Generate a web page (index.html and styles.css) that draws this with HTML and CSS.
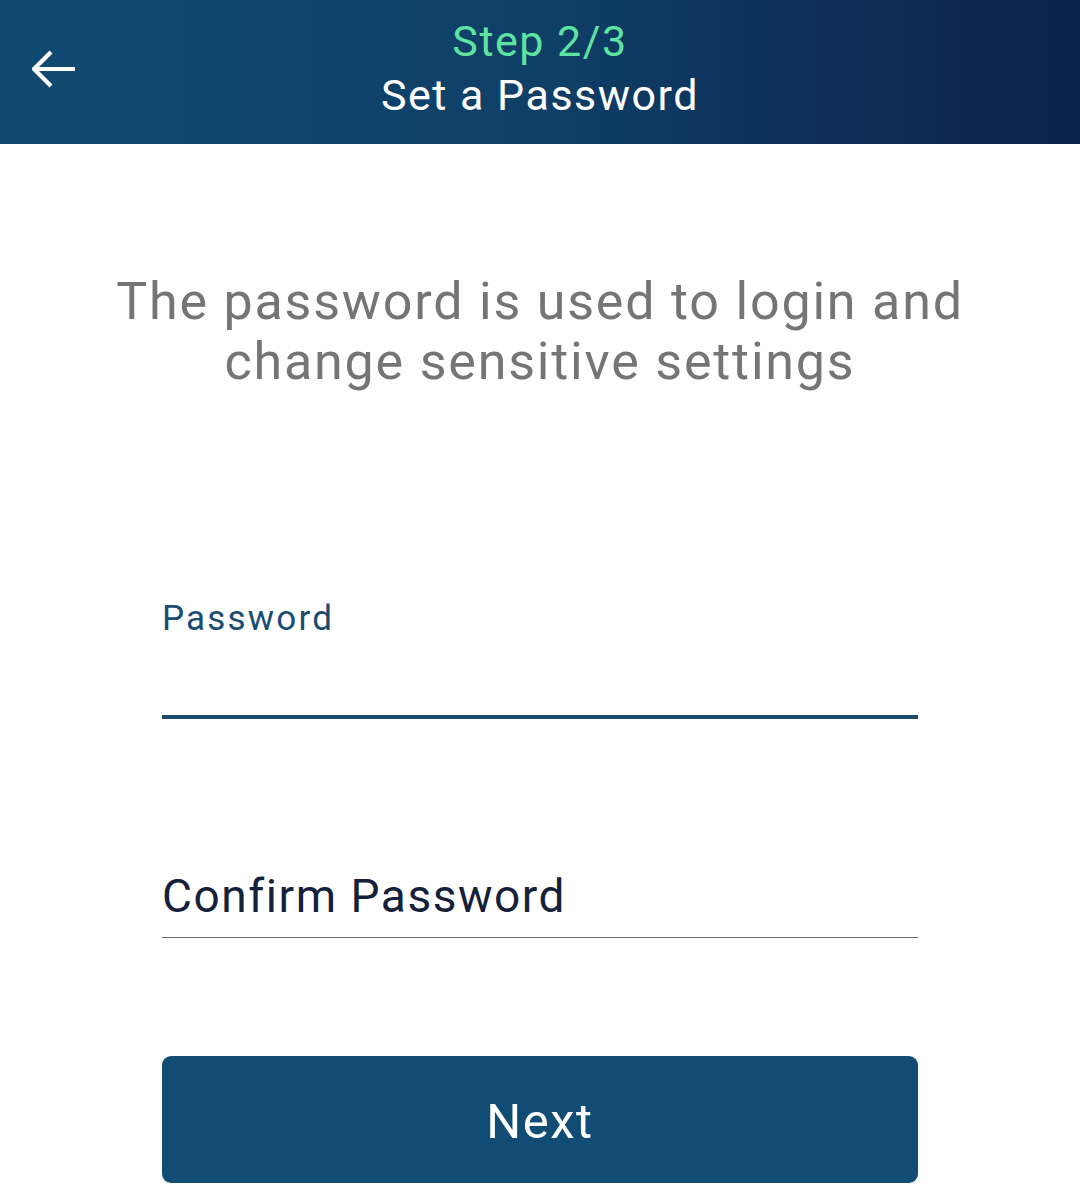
FILE: index.html
```html
<!DOCTYPE html>
<html>
<head>
<meta charset="utf-8">
<link rel="stylesheet" href="styles.css">
</head>
<body>
<header class="topbar">
  <div class="back">
    <svg width="48" height="48" viewBox="0 0 48 48"><path d="M45 24H4M21 7L4 24l17 17" fill="none" stroke="#fff" stroke-width="4.2" stroke-linecap="butt" stroke-linejoin="round"/></svg>
  </div>
  <div class="titles">
    <div class="step">Step 2/3</div>
    <div class="title">Set a Password</div>
  </div>
</header>
<main class="content">
  <p class="desc">The password is used to login and<br>change sensitive settings</p>
  <div class="form">
    <div class="field active">
      <label class="label">Password</label>
      <div class="input"></div>
    </div>
    <div class="field">
      <div class="placeholder">Confirm Password</div>
    </div>
    <button class="next">Next</button>
  </div>
</main>
</body>
</html>
```

FILE: styles.css
```css
* { box-sizing: border-box; }
html, body { margin: 0; padding: 0; background: #fff; }
body { font-family: Roboto, "Noto Sans", sans-serif; width: 1080px; height: 1200px; overflow: hidden; }

.topbar {
  position: relative;
  height: 144px;
  background: linear-gradient(90deg, #0f4a71 0%, #0f3f67 50%, #0c2149 100%);
  display: flex;
  align-items: center;
  justify-content: center;
}
.back {
  position: absolute;
  left: 30px;
  top: 45px;
  width: 48px;
  height: 48px;
}
.titles { text-align: center; margin-top: -6px; }
.step { color: #5fe3a1; font-size: 43px; line-height: 52px; letter-spacing: 1.5px; }
.title { color: #fff; font-size: 43px; line-height: 56px; letter-spacing: 1.5px; }

.content { padding: 0 162px; }
.desc {
  margin: 128px -100px 0;
  text-align: center;
  color: #757575;
  font-size: 52px;
  line-height: 60px;
  letter-spacing: 1.8px;
}
.form { margin-top: 205px; }
.field.active .label {
  display: block;
  color: #1a4b70;
  font-size: 35px;
  line-height: 44px;
  letter-spacing: 2.2px;
}
.input {
  margin-top: 74px;
  height: 4px;
  background: #1b4b70;
}
.field + .field { margin-top: 150px; }
.placeholder {
  color: #15213a;
  font-size: 46px;
  line-height: 54px;
  letter-spacing: 1.55px;
  padding-bottom: 14px;
  border-bottom: 1.5px solid #6a6a6a;
}
.next {
  display: block;
  width: 100%;
  margin-top: 118px;
  height: 127px;
  border: none;
  border-radius: 9px;
  background: #114c74;
  color: #fff;
  font-family: Roboto, "Noto Sans", sans-serif;
  font-size: 49px;
  letter-spacing: 1.5px;
  padding-top: 4px;
}
```
